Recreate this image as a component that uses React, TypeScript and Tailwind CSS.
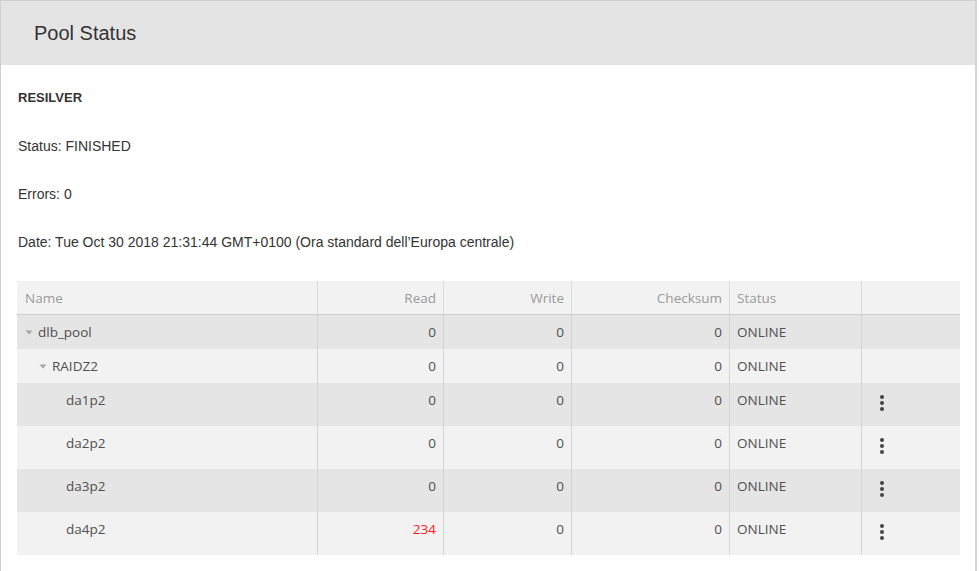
import React from "react";

const rows = [
  { name: "dlb_pool", level: 0, caret: true, read: "0", write: "0", checksum: "0", status: "ONLINE", menu: false, tall: false },
  { name: "RAIDZ2", level: 1, caret: true, read: "0", write: "0", checksum: "0", status: "ONLINE", menu: false, tall: false },
  { name: "da1p2", level: 2, caret: false, read: "0", write: "0", checksum: "0", status: "ONLINE", menu: true, tall: true },
  { name: "da2p2", level: 2, caret: false, read: "0", write: "0", checksum: "0", status: "ONLINE", menu: true, tall: true },
  { name: "da3p2", level: 2, caret: false, read: "0", write: "0", checksum: "0", status: "ONLINE", menu: true, tall: true },
  { name: "da4p2", level: 2, caret: false, read: "234", write: "0", checksum: "0", status: "ONLINE", menu: true, tall: true },
];

function Caret() {
  return (
    <svg width="8" height="5" viewBox="0 0 8 5" className="mr-[5px] shrink-0">
      <path d="M0.5 0.5 L7.5 0.5 L4 4.5 Z" fill="#a5a5a5" />
    </svg>
  );
}

function Kebab() {
  return (
    <svg width="6" height="18" viewBox="0 0 6 18">
      <circle cx="3" cy="3" r="2" fill="#444" />
      <circle cx="3" cy="9" r="2" fill="#444" />
      <circle cx="3" cy="15" r="2" fill="#444" />
    </svg>
  );
}

const cols = "grid grid-cols-[300px_126px_128px_158px_132px_99px]";

export default function App() {
  return (
    <div className="w-[979px] h-[571px] bg-white overflow-hidden" style={{ fontFamily: "Arial, 'Liberation Sans', sans-serif" }}>
      <div className="w-[977px] h-[580px] border-l border-t border-r-2 border-[#cfcfcf] border-r-[#d4d4d4] bg-white">
        <div className="h-[64px] bg-[#e4e4e4] flex items-center pl-[33px]">
          <span className="text-[20px] text-[#333] font-['Liberation_Sans',Arial,sans-serif]">Pool Status</span>
        </div>
        <div className="pl-[17px] pt-[25px] text-[14px] leading-[16px] text-[#333] font-['Liberation_Sans',Arial,sans-serif]">
          <div className="font-bold text-[13px]">RESILVER</div>
          <div className="mt-[32px]">Status: FINISHED</div>
          <div className="mt-[32px]">Errors: 0</div>
          <div className="mt-[32px]">Date: Tue Oct 30 2018 21:31:44 GMT+0100 (Ora standard dell’Europa centrale)</div>
        </div>
        <div className="ml-[16px] mt-[31px] w-[943px] text-[13.5px] leading-[16px] font-['Open_Sans',sans-serif] text-[#505050]">
          <div className={`${cols} h-[34px] bg-[#f2f2f2] border-b border-[#cccccc] text-[#9a9a9a]`}>
            <div className="pl-[8px] pt-[9px]">Name</div>
            <div className="border-l border-[#d9d9d9] pr-[7px] pt-[9px] text-right">Read</div>
            <div className="border-l border-[#d9d9d9] pr-[7px] pt-[9px] text-right">Write</div>
            <div className="border-l border-[#d9d9d9] pr-[7px] pt-[9px] text-right">Checksum</div>
            <div className="border-l border-[#d9d9d9] pl-[7px] pt-[9px]">Status</div>
            <div className="border-l border-[#d9d9d9]"></div>
          </div>
          {rows.map((r, i) => (
            <div
              key={r.name}
              className={`${cols} ${r.tall ? "h-[43px]" : "h-[34px]"} ${i % 2 === 0 ? "bg-[#e5e5e5]" : "bg-[#f2f2f2]"}`}
            >
              <div className="pt-[9px] flex items-start">
                <div
                  className={`flex items-center h-[16px] ${r.level === 0 ? "pl-[8px]" : r.level === 1 ? "pl-[22px]" : "pl-[49px]"}`}
                >
                  {r.caret && <Caret />}
                  <span>{r.name}</span>
                </div>
              </div>
              <div className={`border-l border-[#d4d4d4] pr-[7px] pt-[9px] text-right ${r.read !== "0" ? "text-[#ff1a1a]" : ""}`}>{r.read}</div>
              <div className="border-l border-[#d4d4d4] pr-[7px] pt-[9px] text-right">{r.write}</div>
              <div className="border-l border-[#d4d4d4] pr-[7px] pt-[9px] text-right">{r.checksum}</div>
              <div className="border-l border-[#d4d4d4] pl-[7px] pt-[9px]">{r.status}</div>
              <div className="border-l border-[#d4d4d4] pl-[17px] pt-[11px]">{r.menu && <Kebab />}</div>
            </div>
          ))}
        </div>
      </div>
    </div>
  );
}
